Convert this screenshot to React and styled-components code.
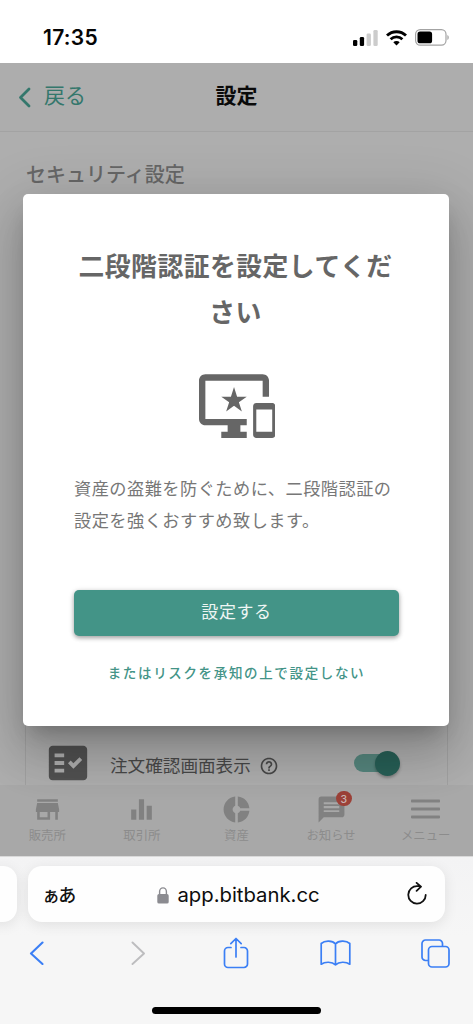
import React from "react";
import styled, { createGlobalStyle } from "styled-components";

const jp = '"Noto Sans CJK JP", sans-serif';

const GlobalStyle = createGlobalStyle`
  * { box-sizing: border-box; }
  body { margin: 0; background: #fff; font-family: ${jp}; }
  button { font: inherit; border: 0; padding: 0; background: none; }
  h1, h2, p { margin: 0; }
  svg { display: block; flex: none; }
`;

const Phone = styled.div`
  width: 473px;
  height: 1024px;
  display: flex;
  flex-direction: column;
  overflow: hidden;
`;

const StatusBar = styled.header`
  height: 63px;
  flex: none;
  display: flex;
  align-items: flex-start;
  justify-content: space-between;
  padding: 25px 23px 0 43px;
  background: #fff;
`;

const Clock = styled.span`
  font: 600 21px/26px Inter, sans-serif;
  letter-spacing: 0.3px;
  color: #050505;
`;

const StatusIcons = styled.div`
  display: flex;
  align-items: center;
  gap: 8px;
  padding-top: 4px;
`;

const WebView = styled.main`
  position: relative;
  height: 793px;
  flex: none;
  display: flex;
  flex-direction: column;
  background: #aeaeae;
  overflow: hidden;
`;

const AppHeader = styled.div`
  height: 69px;
  flex: none;
  display: grid;
  grid-template-columns: 1fr auto 1fr;
  align-items: center;
  padding: 0 19px;
  border-bottom: 1px solid #a3a3a3;
  background: #adadad;
`;

const BackLink = styled.button`
  display: flex;
  align-items: center;
  gap: 13px;
  height: 30px;
  margin-left: -1px;
  font-size: 21px;
  line-height: 30px;
  color: #34776c;
  & > span { margin-top: -6px; }
`;

const PageTitle = styled.h1`
  font-size: 21px;
  line-height: 30px;
  font-weight: 700;
  color: #0a0a0a;
  margin-top: -6px;
`;

const Content = styled.section`
  flex: 1;
  display: flex;
  flex-direction: column;
  padding: 27px 25px 0;
`;

const SectionTitle = styled.h2`
  margin-left: 1px;
  font-size: 20px;
  line-height: 30px;
  font-weight: 500;
  color: #666;
`;

const SettingsCard = styled.div`
  flex: 1;
  margin-top: 20px;
  display: flex;
  flex-direction: column;
  justify-content: flex-end;
  border: 1px solid #a0a0a0;
  border-bottom: 0;
`;

const SettingRow = styled.div`
  height: 44px;
  display: flex;
  align-items: center;
  padding: 0 47px 0 19px;
  color: #515151;
`;

const RowLabel = styled.span`
  margin: 3px 8px 0 19px;
  font-size: 17.6px;
  line-height: 26px;
  color: #484848;
`;

const HelpSlot = styled.span`
  margin-top: 5px;
  flex: 1;
  color: #484848;
`;

const Switch = styled.span`
  display: flex;
  align-items: center;
`;

const Track = styled.span`
  width: 40px;
  height: 18px;
  border-radius: 9px;
  background: #55857d;
`;

const Thumb = styled.span`
  width: 25px;
  height: 25px;
  margin-left: -19px;
  border-radius: 50%;
  background: #275f56;
  box-shadow: 0 2px 3px rgba(0, 0, 0, 0.28);
`;

const BottomNav = styled.nav`
  height: 71px;
  flex: none;
  display: grid;
  grid-template-columns: repeat(5, 1fr);
  background: #a8a8a8;
`;

const NavItem = styled.div`
  display: flex;
  flex-direction: column;
  align-items: center;
  padding-top: 7px;
`;

const NavIcon = styled.span`
  position: relative;
  height: 34px;
  display: flex;
  align-items: center;
  color: #818181;
`;

const NavLabel = styled.span`
  font-size: 12.4px;
  line-height: 18px;
  white-space: nowrap;
  color: #8c8c8c;
`;

const Badge = styled.span`
  position: absolute;
  left: 20.5px;
  top: -1.5px;
  width: 15.5px;
  height: 15.5px;
  border-radius: 50%;
  background: #9c4138;
  color: #c9b5b3;
  font: 500 10.5px/17px Inter, sans-serif;
  text-align: center;
`;

const Backdrop = styled.div`
  position: absolute;
  inset: 0;
  display: flex;
  align-items: center;
  justify-content: center;
  padding: 0 24px 0 23px;
`;

const Dialog = styled.div`
  width: 426px;
  height: 532px;
  display: flex;
  flex-direction: column;
  align-items: center;
  padding: 48px 50px 0 51px;
  border-radius: 5px;
  background: #fff;
  box-shadow: 0 13px 18px -8px rgba(0, 0, 0, 0.2),
    0 29px 46px 4px rgba(0, 0, 0, 0.14), 0 11px 56px 10px rgba(0, 0, 0, 0.12);
`;

const DialogTitle = styled.h2`
  width: 328px;
  margin-left: -2px;
  text-align: center;
  font-size: 25.8px;
  line-height: 46px;
  font-weight: 700;
  letter-spacing: 0.5px;
  color: #666;
`;

const DialogIcon = styled.div`
  margin: 34px 0 0 1px;
  color: #666;
`;

const DialogText = styled.p`
  width: 325px;
  margin-top: 28px;
  font-size: 17.2px;
  line-height: 32px;
  letter-spacing: 0.48px;
  color: #777;
`;

const PrimaryButton = styled.button`
  width: 325px;
  height: 46px;
  margin-top: 54px;
  padding-bottom: 4px;
  border-radius: 5px;
  background: #439487;
  color: #eef6f4;
  font-size: 17px;
  letter-spacing: 0.6px;
  box-shadow: 0 2px 4px rgba(0, 0, 0, 0.3), 0 1px 6px rgba(0, 0, 0, 0.12);
`;

const TextButton = styled.button`
  margin-top: 24px;
  font-size: 13.5px;
  line-height: 24px;
  font-weight: 500;
  letter-spacing: 1.65px;
  white-space: nowrap;
  color: #439487;
`;

const Browser = styled.footer`
  height: 168px;
  flex: none;
  display: flex;
  flex-direction: column;
  background: linear-gradient(#f3f3f4, #f6f6f6 80px);
  border-top: 1px solid #d9d9d9;
`;

const TabStrip = styled.div`
  display: flex;
  gap: 11px;
  height: 56px;
  flex: none;
  margin: 9px 0 0 -13px;
`;

const AddressBar = styled.div`
  width: 417px;
  display: grid;
  grid-template-columns: 1fr auto 1fr;
  align-items: center;
  padding: 0 18px 0 14px;
  border-radius: 14px;
  background: #fefefe;
  box-shadow: 0 3px 14px rgba(0, 0, 0, 0.09);
`;

const PreviousTab = styled.div`
  width: 30px;
  border-radius: 14px;
  background: #fefefe;
  box-shadow: 0 3px 14px rgba(0, 0, 0, 0.09);
`;

const ReaderButton = styled.span`
  font-size: 18px;
  line-height: 26px;
  font-weight: 500;
  letter-spacing: -1.7px;
  color: #111;
`;

const Url = styled.span`
  display: flex;
  align-items: center;
  gap: 8px;
  margin: 2px -4px 0 4px;
  font: 400 20.3px/28px Inter, sans-serif;
  color: #0c0c0c;
`;

const ReloadSlot = styled.span`
  justify-self: end;
`;

const Toolbar = styled.div`
  display: flex;
  align-items: center;
  justify-content: space-between;
  height: 40px;
  margin-top: 11px;
  padding: 0 22.5px 0 21px;
  color: #3b7ff5;
`;

const ToolButton = styled.span`
  width: 30px;
  display: flex;
  justify-content: center;
  &:nth-child(2) { margin: 0 -3px 0 3px; }
`;

const HomeIndicator = styled.div`
  width: 169px;
  height: 6.5px;
  margin: 34px auto 0;
  border-radius: 4px;
  background: #000;
`;

const Glyph = ({ size = 30, d }) => (
  <svg width={size} height={size} viewBox="0 0 24 24" fill="currentColor">
    <path d={d} />
  </svg>
);

const Line = ({ w, h, color = "currentColor", weight = 1.8, d }) => (
  <svg width={w} height={h} viewBox={`0 0 ${w} ${h}`} fill="none" stroke={color}
    strokeWidth={weight} strokeLinecap="round" strokeLinejoin="round">
    <path d={d} />
  </svg>
);

const icons = {
  devices:
    "M23 11.01L18 11c-.55 0-1 .45-1 1v9c0 .55.45 1 1 1h5c.55 0 1-.45 1-1v-9c0-.55-.45-.99-1-.99zM23 20h-5v-7h5v7zM20 2H2C.89 2 0 2.89 0 4v12c0 1.1.89 2 2 2h7v2H7v2h8v-2h-2v-2h2v-2H2V4h18v5h2V4c0-1.11-.9-2-2-2zm-8.03 7L11 6l-.97 3H7l2.47 1.76-.94 2.91 2.47-1.8 2.47 1.8-.94-2.91L15 9h-3.03z",
  factCheck:
    "M20 3H4c-1.1 0-2 .9-2 2v14c0 1.1.9 2 2 2h16c1.1 0 2-.9 2-2V5c0-1.1-.9-2-2-2zM10 17H5v-2h5v2zm0-4H5v-2h5v2zm0-4H5V7h5v2zm4.82 6L12 12.16l1.41-1.41 1.41 1.42L17.99 9l1.42 1.42L14.82 15z",
  help:
    "M11 18h2v-2h-2v2zm1-16C6.48 2 2 6.48 2 12s4.48 10 10 10 10-4.48 10-10S17.52 2 12 2zm0 18c-4.41 0-8-3.59-8-8s3.59-8 8-8 8 3.59 8 8-3.59 8-8 8zm0-14c-2.21 0-4 1.79-4 4h2c0-1.1.9-2 2-2s2 .9 2 2c0 2-3 1.75-3 5h2c0-2.25 3-2.5 3-5 0-2.21-1.79-4-4-4z",
  store: "M20 4H4v2h16V4zm1 10v-2l-1-5H4l-1 5v2h1v6h10v-6h4v6h2v-6h1zm-9 4H6v-4h6v4z",
  chart: "M10 20h4V4h-4v16zm-6 0h4v-8H4v8zM16 9v11h4V9h-4z",
  donut:
    "M11 9.16V2c-5 .5-9 4.79-9 10s4 9.5 9 10v-7.16c-1-.41-2-1.52-2-2.84s1-2.43 2-2.84zM14.86 11H22c-.48-4.75-4-8.53-9-9v7.16c1 .3 1.52.98 1.86 1.84zM13 14.84V22c5-.47 8.52-4.25 9-9h-7.14c-.34.86-.86 1.54-1.86 1.84z",
  message:
    "M20 2H4c-1.1 0-1.99.9-1.99 2L2 22l4-4h14c1.1 0 2-.9 2-2V4c0-1.1-.9-2-2-2zm-2 12H6v-1.5h12v1.5zm0-3H6V9.3h12V11zm0-3H6V6.3h12V8z",
};

const MenuIcon = () => (
  <svg width="29" height="20" viewBox="0 0 29 20" fill="currentColor">
    <rect y="0.5" width="29" height="3" rx="0.8" />
    <rect y="8.5" width="29" height="3" rx="0.8" />
    <rect y="16.4" width="29" height="3" rx="0.8" />
  </svg>
);

const tabs = [
  { label: "販売所", icon: <Glyph size={31} d={icons.store} /> },
  { label: "取引所", icon: <Glyph size={31} d={icons.chart} /> },
  { label: "資産", icon: <Glyph size={31} d={icons.donut} /> },
  { label: "お知らせ", icon: <Glyph size={31} d={icons.message} />, badge: 3 },
  { label: "メニュー", icon: <MenuIcon /> },
];

const Signal = () => (
  <svg width="25" height="16" viewBox="0 0 25 16">
    <rect x="0" y="10" width="4.3" height="6" rx="1.3" fill="#000" />
    <rect x="6.8" y="7" width="4.3" height="9" rx="1.3" fill="#000" />
    <rect x="13.6" y="3.5" width="4.3" height="12.5" rx="1.3" fill="#ccc" />
    <rect x="20.4" y="0" width="4.3" height="16" rx="1.3" fill="#ccc" />
  </svg>
);

const Wifi = () => (
  <svg width="21" height="16" viewBox="0 0 21 16" fill="none" stroke="#000" strokeWidth="2.8">
    <path d="M1 5.6a13.6 13.6 0 0 1 19 0" />
    <path d="M4.6 9.3a8.5 8.5 0 0 1 11.8 0" />
    <path d="M10.5 15.6L7.3 12.3a4.6 4.6 0 0 1 6.4 0z" fill="#000" stroke="none" />
  </svg>
);

const Battery = () => (
  <svg width="35" height="17" viewBox="0 0 35 17">
    <rect x="0.6" y="0.6" width="30.4" height="15.6" rx="4.6" fill="none" stroke="#a3a3a3" strokeWidth="1.2" />
    <rect x="2.5" y="2.5" width="14.6" height="11.8" rx="2.6" fill="#000" />
    <path d="M32.4 6v5c1.8-.7 1.8-4.3 0-5z" fill="#a3a3a3" />
  </svg>
);

const Lock = () => (
  <svg width="12" height="17" viewBox="0 0 12 17">
    <rect x="0.3" y="7" width="11.4" height="9.6" rx="1.7" fill="#8b8b90" />
    <path d="M2.6 8V4.6a3.4 3.7 0 0 1 6.8 0V8" fill="none" stroke="#8b8b90" strokeWidth="1.4" />
  </svg>
);

const tools = [
  { name: "back", w: 15, h: 24, weight: 2.1, d: "M13.5 1.5L2 12.5L13.5 23" },
  { name: "forward", w: 15, h: 24, weight: 1.9, color: "#bdbdbf", d: "M1.5 1.5L13 12.5L1.5 23" },
  {
    name: "share", w: 26, h: 32, weight: 1.7,
    d: "M8 10.5H5a3.5 3.5 0 0 0-3.5 3.5V27A3.5 3.5 0 0 0 5 30.5H21A3.5 3.5 0 0 0 24.5 27V14A3.5 3.5 0 0 0 21 10.5H18M13 20V1.5M7.8 6.6L13 1.5L18.2 6.6",
  },
  {
    name: "bookmarks", w: 31, h: 26, weight: 1.7,
    d: "M15.5 4C12.5 .5 5 .2 1.2 3.5V24.2C5 21.5 12 21.5 15.5 24.8C19 21.5 26 21.5 29.8 24.2V3.5C26 .2 18.5 .5 15.5 4V24.8",
  },
  {
    name: "tabs", w: 29, h: 29, weight: 1.7,
    d: "M7.5 21.5H4.5A3.5 3.5 0 0 1 1 18V4.5A3.5 3.5 0 0 1 4.5 1H18A3.5 3.5 0 0 1 21.5 4.5V7.5M11 7.5H24.5A3.5 3.5 0 0 1 28 11V24.5A3.5 3.5 0 0 1 24.5 28H11A3.5 3.5 0 0 1 7.5 24.5V11A3.5 3.5 0 0 1 11 7.5Z",
  },
];

export default function App() {
  return (
    <Phone>
      <GlobalStyle />
      <StatusBar>
        <Clock>17:35</Clock>
        <StatusIcons>
          <Signal />
          <Wifi />
          <Battery />
        </StatusIcons>
      </StatusBar>

      <WebView>
        <AppHeader>
          <BackLink>
            <Line w={13} h={21} weight={2.8} d="M11 2L2.5 10.5L11 19" />
            <span>戻る</span>
          </BackLink>
          <PageTitle>設定</PageTitle>
        </AppHeader>
        <Content>
          <SectionTitle>セキュリティ設定</SectionTitle>
          <SettingsCard>
            <SettingRow>
              <Glyph size={46} d={icons.factCheck} />
              <RowLabel>注文確認画面表示</RowLabel>
              <HelpSlot>
                <Glyph size={20} d={icons.help} />
              </HelpSlot>
              <Switch>
                <Track />
                <Thumb />
              </Switch>
            </SettingRow>
          </SettingsCard>
        </Content>
        <BottomNav>
          {tabs.map((tab) => (
            <NavItem key={tab.label}>
              <NavIcon>
                {tab.icon}
                {tab.badge && <Badge>{tab.badge}</Badge>}
              </NavIcon>
              <NavLabel>{tab.label}</NavLabel>
            </NavItem>
          ))}
        </BottomNav>
        <Backdrop>
          <Dialog role="dialog">
            <DialogTitle>二段階認証を設定してください</DialogTitle>
            <DialogIcon>
              <Glyph size={76.4} d={icons.devices} />
            </DialogIcon>
            <DialogText>資産の盗難を防ぐために、二段階認証の設定を強くおすすめ致します。</DialogText>
            <PrimaryButton>設定する</PrimaryButton>
            <TextButton>またはリスクを承知の上で設定しない</TextButton>
          </Dialog>
        </Backdrop>
      </WebView>

      <Browser>
        <TabStrip>
          <PreviousTab />
          <AddressBar>
            <ReaderButton>ぁあ</ReaderButton>
            <Url>
              <Lock />
              app.bitbank.cc
            </Url>
            <ReloadSlot>
              <Line w={20} h={25} color="#111" d="M12 4.2H10.5A8.7 8.7 0 1 0 18.7 12.9M9.6 .9L14 4.7L9.6 8.9" />
            </ReloadSlot>
          </AddressBar>
        </TabStrip>
        <Toolbar>
          {tools.map(({ name, ...shape }) => (
            <ToolButton key={name}>
              <Line {...shape} />
            </ToolButton>
          ))}
        </Toolbar>
        <HomeIndicator />
      </Browser>
    </Phone>
  );
}
